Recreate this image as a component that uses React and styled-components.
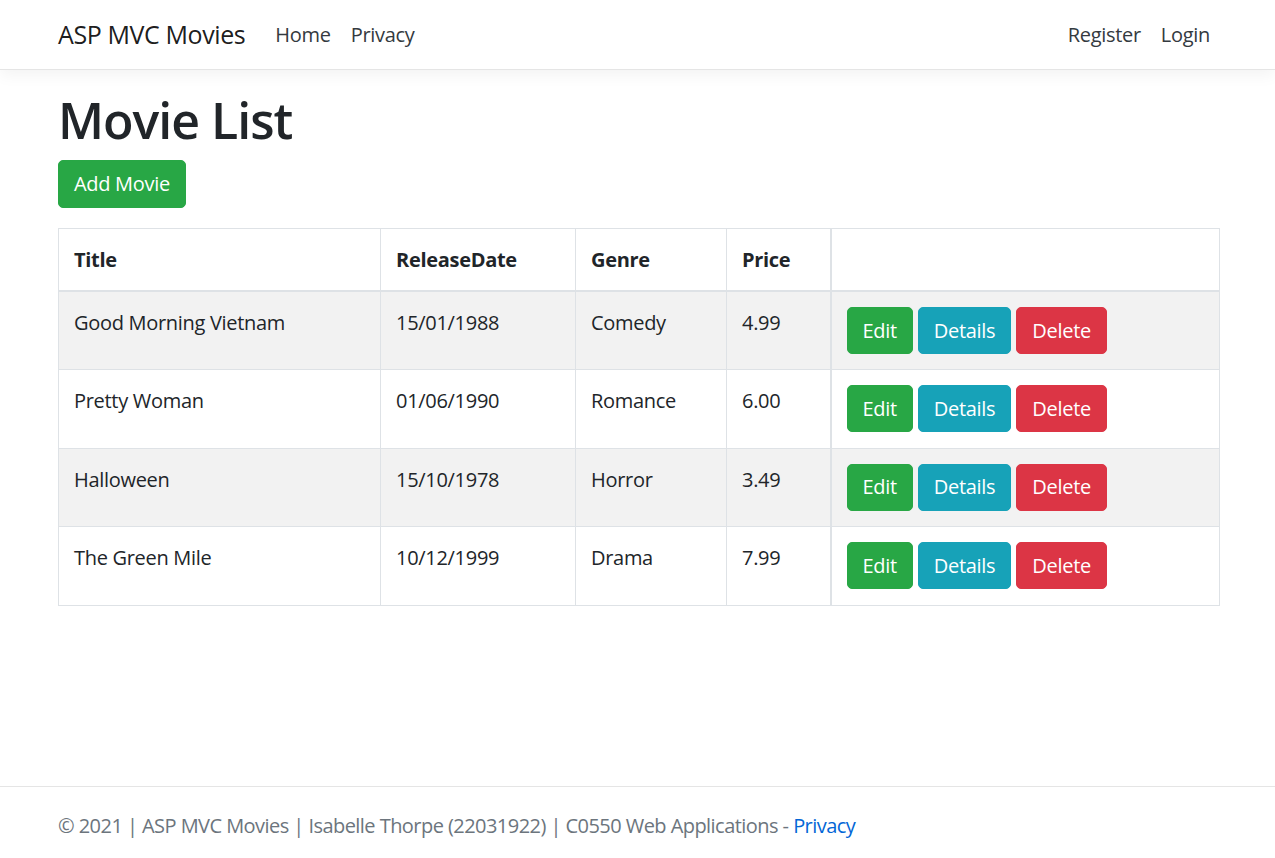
import React from "react";
import styled, { createGlobalStyle } from "styled-components";

const Global = createGlobalStyle`
  * { box-sizing: border-box; }
  html, body { margin: 0; padding: 0; }
  body {
    font-family: "Open Sans", "Noto Sans", "Liberation Sans", sans-serif;
    font-size: 20px;
    line-height: 1.5;
    letter-spacing: -0.3px;
    color: #212529;
    background: #fff;
  }
`;

const Page = styled.div`
  min-height: 100vh;
  display: flex;
  flex-direction: column;
`;

const Navbar = styled.header`
  height: 70px;
  border-bottom: 1px solid #e5e5e5;
  box-shadow: 0 5px 15px rgba(0, 0, 0, 0.05);
  background: #fff;
  margin-bottom: 20px;
`;

const Container = styled.div`
  width: 1162px;
  margin: 0 0 0 58px;
`;

const NavInner = styled(Container)`
  height: 100%;
  display: flex;
  align-items: center;
`;

const Brand = styled.a`
  font-size: 25px;
  color: rgba(0, 0, 0, 0.9);
  text-decoration: none;
  margin-right: 20px;
  white-space: nowrap;
  letter-spacing: -0.4px;
`;

const NavList = styled.nav`
  display: flex;
  margin-left: ${(p) => (p.$right ? "auto" : "0")};
`;

const NavLink = styled.a`
  color: #343a40;
  text-decoration: none;
  padding: 0 10px;
  font-size: 20px;
`;

const Main = styled.main`
  flex: 1;
`;

const Title = styled.h1`
  font-size: 50px;
  font-weight: 600;
  line-height: 1.2;
  letter-spacing: -1px;
  margin: 0 0 10px;
  color: #212529;
`;

const colors = {
  success: "#28a745",
  info: "#17a2b8",
  danger: "#dc3545",
};

const Button = styled.a`
  display: inline-block;
  vertical-align: middle;
  background: ${(p) => colors[p.$variant]};
  border: 1px solid ${(p) => colors[p.$variant]};
  color: #fff;
  font-size: 20px;
  line-height: 30px;
  padding: ${(p) => (p.$large ? "8px 15px" : "7.5px 15px")};
  border-radius: 5px;
  text-decoration: none;
  white-space: nowrap;
`;

const ButtonRow = styled.p`
  margin: 0 0 20px;
`;

const Table = styled.table`
  width: 100%;
  border-collapse: collapse;
  border: 1px solid #dee2e6;
  margin-bottom: 20px;
`;

const Th = styled.th`
  text-align: left;
  font-weight: 700;
  padding: 16px 15px 15px;
  border: 1px solid #dee2e6;
  border-bottom: 2px solid #dee2e6;
  vertical-align: bottom;
  ${(p) => p.$actions && "border-left: 2px solid #dee2e6;"}
`;

const Tr = styled.tr`
  background: ${(p) => (p.$odd ? "rgba(0,0,0,0.05)" : "transparent")};
`;

const Td = styled.td`
  padding: 16px 15px 15px;
  height: 78.5px;
  border: 1px solid #dee2e6;
  vertical-align: top;
  ${(p) => p.$actions && "border-left: 2px solid #dee2e6;"}
`;

const Actions = styled.div`
  display: flex;
  gap: 5px;
  margin-top: -1px;
`;

const Footer = styled.footer`
  border-top: 1px solid #e5e5e5;
  height: 72px;
  line-height: 78px;
  color: #6c757d;
  white-space: nowrap;
  letter-spacing: -0.55px;
`;

const FooterLink = styled.a`
  color: #0366d6;
  text-decoration: none;
`;

const movies = [
  ["Good Morning Vietnam", "15/01/1988", "Comedy", "4.99"],
  ["Pretty Woman", "01/06/1990", "Romance", "6.00"],
  ["Halloween", "15/10/1978", "Horror", "3.49"],
  ["The Green Mile", "10/12/1999", "Drama", "7.99"],
];

const widths = [322, 195, 151, 104, null];

export default function App() {
  return (
    <Page>
      <Global />
      <Navbar>
        <NavInner>
          <Brand href="#">ASP MVC Movies</Brand>
          <NavList>
            <NavLink href="#">Home</NavLink>
            <NavLink href="#">Privacy</NavLink>
          </NavList>
          <NavList $right>
            <NavLink href="#">Register</NavLink>
            <NavLink href="#">Login</NavLink>
          </NavList>
        </NavInner>
      </Navbar>
      <Main>
        <Container>
          <Title>Movie List</Title>
          <ButtonRow>
            <Button $variant="success" $large href="#">Add Movie</Button>
          </ButtonRow>
          <Table>
            <colgroup>
              {widths.map((w, i) => (
                <col key={i} style={w ? { width: w } : undefined} />
              ))}
            </colgroup>
            <thead>
              <tr>
                <Th>Title</Th>
                <Th>ReleaseDate</Th>
                <Th>Genre</Th>
                <Th>Price</Th>
                <Th $actions></Th>
              </tr>
            </thead>
            <tbody>
              {movies.map((m, i) => (
                <Tr key={m[0]} $odd={i % 2 === 0}>
                  <Td>{m[0]}</Td>
                  <Td>{m[1]}</Td>
                  <Td>{m[2]}</Td>
                  <Td>{m[3]}</Td>
                  <Td $actions>
                    <Actions>
                      <Button $variant="success" href="#">Edit</Button>
                      <Button $variant="info" href="#">Details</Button>
                      <Button $variant="danger" href="#">Delete</Button>
                    </Actions>
                  </Td>
                </Tr>
              ))}
            </tbody>
          </Table>
        </Container>
      </Main>
      <Footer>
        <Container>
          © 2021 | ASP MVC Movies | Isabelle Thorpe (22031922) | C0550 Web Applications - <FooterLink href="#">Privacy</FooterLink>
        </Container>
      </Footer>
    </Page>
  );
}
